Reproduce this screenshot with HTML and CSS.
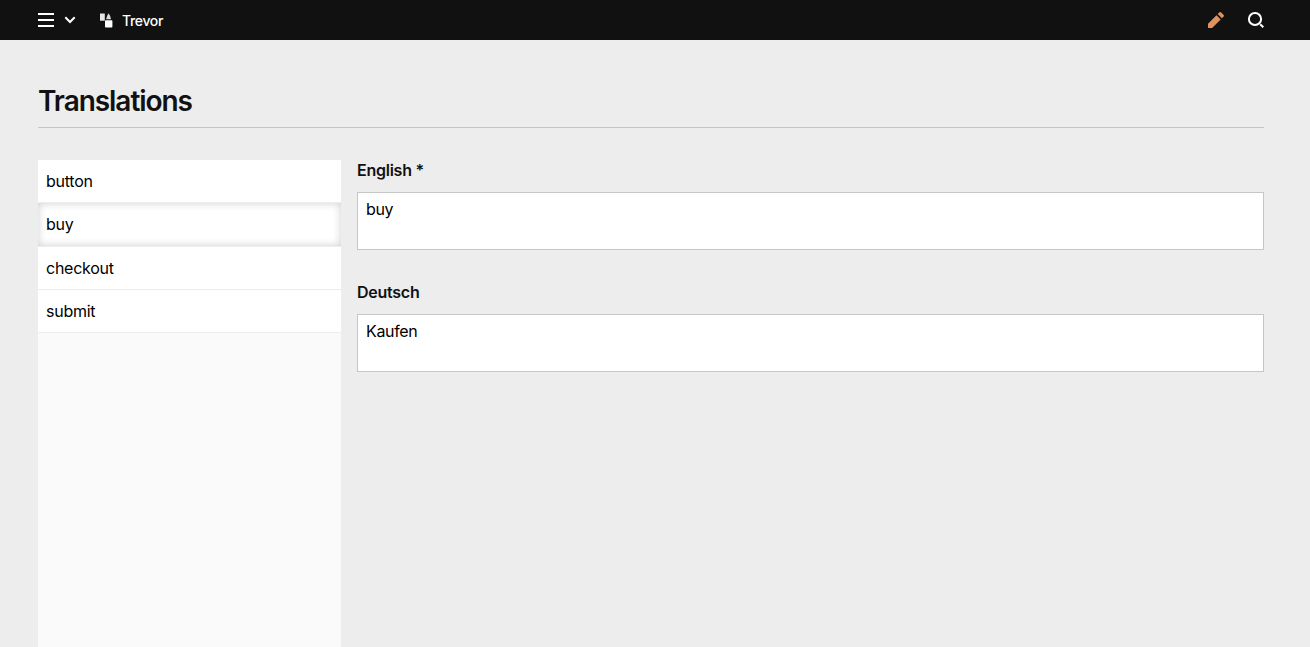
FILE: index.html
```html
<!DOCTYPE html>
<html lang="en">
<head>
<meta charset="utf-8">
<title>Translations</title>
<link rel="stylesheet" href="styles.css">
</head>
<body>
<header class="topbar">
  <button class="menu" aria-label="Menu">
    <svg width="16" height="16" viewBox="0 0 16 16" fill="#fff"><path d="M0 1h16v2H0zM0 7h16v2H0zM0 13h16v2H0z"/></svg>
    <svg class="chevron" width="12" height="8" viewBox="0 0 12 8" fill="none" stroke="#fff" stroke-width="2"><path d="M1.3 1.3 6 6 10.7 1.3"/></svg>
  </button>
  <a class="crumb">
    <svg width="13" height="15" viewBox="0 0 13 15" fill="#fff"><path d="M0 .5h4.8v7.2H0z" opacity=".9"/><path d="M8.6.2Q11 3.5 11 6.3H6.2Q6.2 3.5 8.6.2z" opacity=".85"/><rect x="5" y="7.3" width="7.4" height="7.2" rx=".7"/></svg>
    <span>Trevor</span>
  </a>
  <div class="signals">
    <svg width="18" height="18" viewBox="0 0 18 18" fill="#de935f"><path d="M1 12.7 9.5 4.2l4.2 4.2-8.6 8.5H1zM10.7 3l1.8-1.8q.7-.6 1.4 0l2.8 2.8q.6.7 0 1.4l-1.8 1.8z"/></svg>
    <svg width="18" height="18" viewBox="0 0 18 18" fill="none" stroke="#fff" stroke-width="2"><circle cx="8" cy="8" r="6.1"/><path d="m13.2 13.2 3.1 3.1"/></svg>
  </div>
</header>
<main class="view">
  <h1 class="headline">Translations</h1>
  <div class="editor">
    <nav class="keys">
      <a class="key">button</a>
      <a class="key key-active">buy</a>
      <a class="key">checkout</a>
      <a class="key">submit</a>
    </nav>
    <section class="fields">
      <div class="field"><div class="label">English *</div><div class="input">buy</div></div>
      <div class="field"><div class="label">Deutsch</div><div class="input">Kaufen</div></div>
    </section>
  </div>
</main>
</body>
</html>
```
FILE: styles.css
```css
* { box-sizing: border-box; }
body {
  margin: 0;
  height: 100vh;
  display: flex;
  flex-direction: column;
  overflow: hidden;
  background: #ededed;
  color: #111;
  font: 16px/20px Inter, "Liberation Sans", sans-serif;
}
svg { display: block; flex: none; }
.topbar {
  display: flex;
  align-items: center;
  height: 40px;
  flex: none;
  padding: 0 45px 0 38px;
  background: #111;
  color: #fff;
}
.menu {
  display: flex;
  align-items: center;
  gap: 10px;
  padding: 0;
  border: 0;
  background: none;
}
.crumb {
  display: flex;
  align-items: center;
  gap: 9px;
  margin-left: 24px;
  font-size: 14px;
  font-weight: 500;
  letter-spacing: -.35px;
}
.crumb span { padding-top: 2px; }
.signals { display: flex; gap: 22px; margin-left: auto; }
.view {
  flex: 1;
  display: flex;
  flex-direction: column;
  padding: 40px 46px 0 38px;
}
.headline {
  margin: 0 0 32px;
  height: 48px;
  padding-top: 5px;
  border-bottom: 1px solid #c6c6c6;
  font-size: 28px;
  font-weight: 600;
  line-height: 33px;
  letter-spacing: -1.05px;
}
.editor {
  flex: 1;
  display: grid;
  grid-template-columns: 303px 1fr;
  gap: 16px;
}
.keys { background: #fafafa; }
.key {
  display: block;
  height: 43.3px;
  padding: 11px 8px;
  border-bottom: 1px solid #ededed;
  background: #fff;
  color: #000;
  letter-spacing: -.25px;
}
.key-active { box-shadow: inset 0 0 8px rgba(0, 0, 0, .2); }
.fields { display: flex; flex-direction: column; gap: 32px; }
.label {
  margin-bottom: 12px;
  font-weight: 600;
  letter-spacing: -.25px;
}
.input {
  height: 58px;
  padding: 6px 8px;
  border: 1px solid #c6c6c6;
  background: #fff;
  color: #000;
  letter-spacing: -.35px;
}
```
